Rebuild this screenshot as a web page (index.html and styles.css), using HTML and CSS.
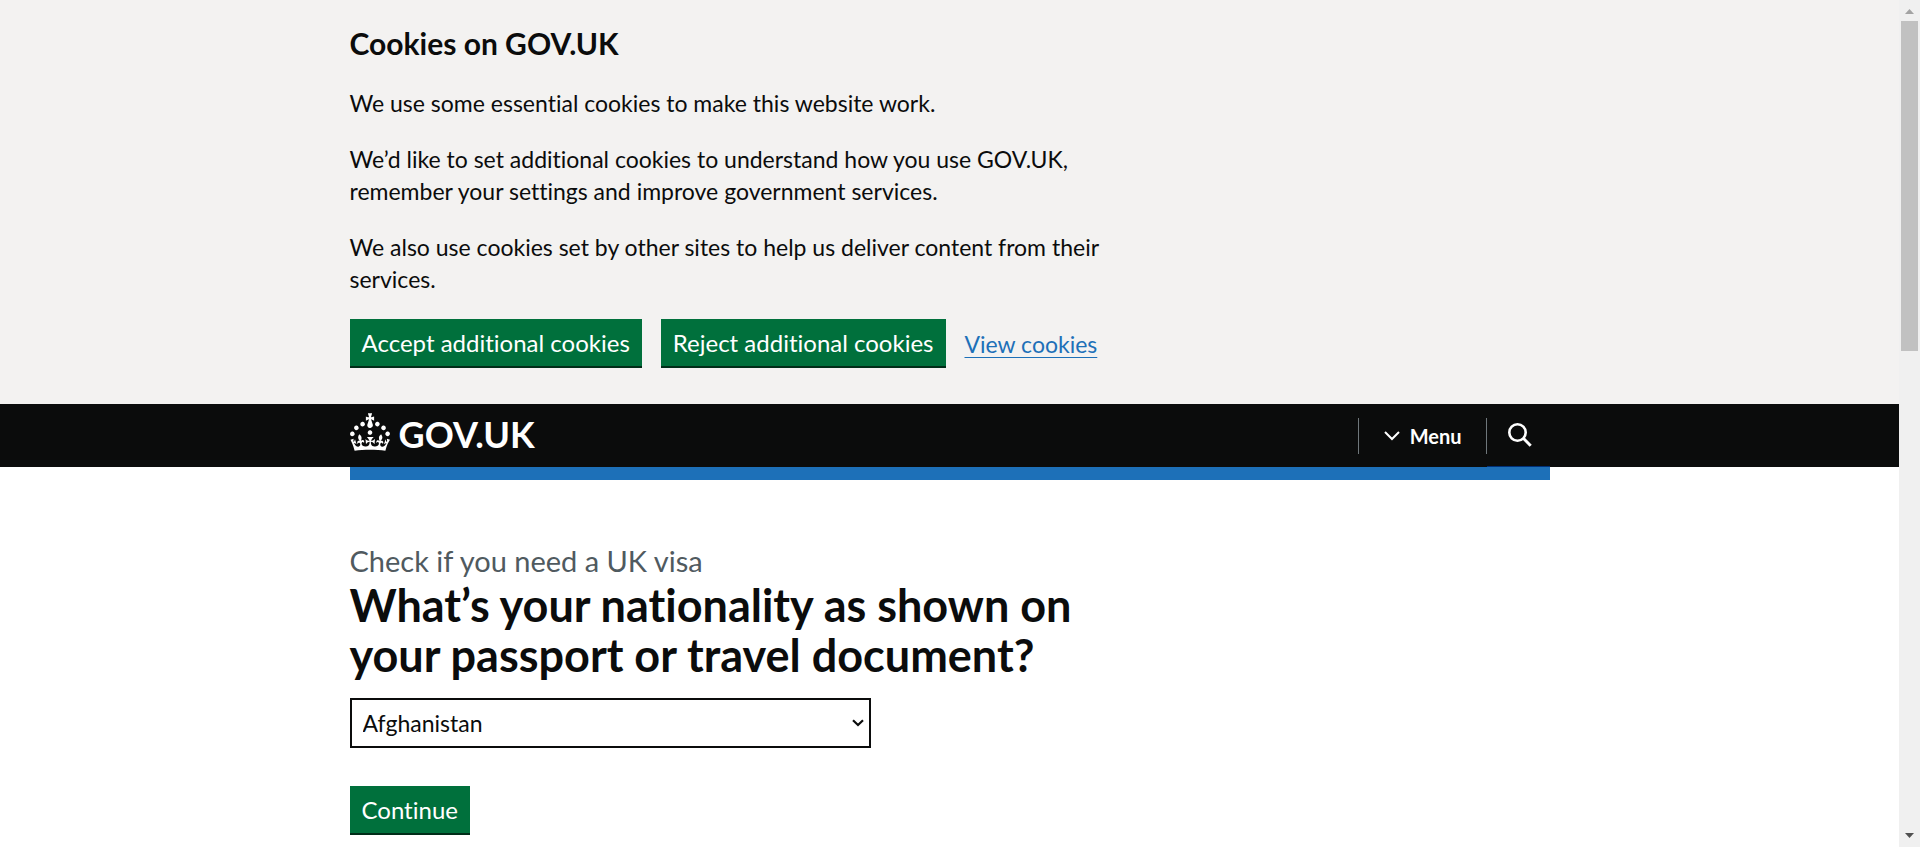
FILE: index.html
```html
<!DOCTYPE html>
<html lang="en">
<head>
<meta charset="utf-8">
<meta name="viewport" content="width=device-width, initial-scale=1">
<title>What’s your nationality as shown on your passport or travel document? - Check if you need a UK visa - GOV.UK</title>
<link rel="stylesheet" href="styles.css">
</head>
<body>
<div class="page">
  <section class="cookie-banner" aria-label="Cookies on GOV.UK">
    <div class="container">
      <div class="two-thirds">
        <h2 class="cookie-title">Cookies on GOV.UK</h2>
        <p class="body-text">We use some essential cookies to make this website work.</p>
        <p class="body-text">We’d like to set additional cookies to understand how you use GOV.UK, remember your settings and improve government services.</p>
        <p class="body-text">We also use cookies set by other sites to help us deliver content from their services.</p>
      </div>
      <div class="button-group">
        <button class="button" type="button">Accept additional cookies</button>
        <button class="button" type="button">Reject additional cookies</button>
        <a class="link" href="#">View cookies</a>
      </div>
    </div>
  </section>

  <header class="header">
    <div class="container header-row">
      <a class="logo" href="#">
        <svg class="crown" viewBox="0 0 32 30" aria-hidden="true"><path fill="currentColor" fill-rule="evenodd" d="M22.6 10.4c-1 .4-2-.1-2.4-1-.4-.9.1-2 1-2.4.9-.4 2 .1 2.4 1s-.1 2-1 2.4m-5.9 6.7c-.9.4-2-.1-2.4-1-.4-.9.1-2 1-2.4.9-.4 2 .1 2.4 1s-.1 2-1 2.4m10.8-3.7c-1 .4-2-.1-2.4-1-.4-.9.1-2 1-2.4.9-.4 2 .1 2.4 1s0 2-1 2.4m3.3 4.8c-1 .4-2-.1-2.4-1-.4-.9.1-2 1-2.4.9-.4 2 .1 2.4 1s-.1 2-1 2.4M17 4.7l2.3 1.2V2.5l-2.3.7-.2-.2.9-3h-3.4l.9 3-.2.2c-.1.1-2.3-.7-2.3-.7v3.4L15 4.7c.1.1.1.2.2.2l-1.3 4c-.1.2-.1.4-.1.6 0 1.1.8 2 1.9 2.2h.7c1-.2 1.9-1.1 1.9-2.1 0-.2 0-.4-.1-.6l-1.3-4c-.1-.2 0-.2.1-.3m-7.6 5.7c.9.4 2-.1 2.4-1 .4-.9-.1-2-1-2.4-.9-.4-2 .1-2.4 1s0 2 1 2.4m-5 3c.9.4 2-.1 2.4-1 .4-.9-.1-2-1-2.4-.9-.4-2 .1-2.4 1s.1 2 1 2.4m-3.2 4.8c.9.4 2-.1 2.4-1 .4-.9-.1-2-1-2.4-.9-.4-2 .1-2.4 1s0 2 1 2.4m14.8 11c4.4 0 8.6.3 12.3.8 1.1-4.5 2.4-7 3.7-8.8l-2.5-.9c.2 1.3.3 1.9 0 2.7-.4-.4-.8-1.1-1.1-2.3l-1.2 4c.7-.5 1.3-.8 2-.9-1.1 2.5-2.6 3.1-3.5 3-1.1-.2-1.7-1.2-1.5-2.1.3-1.2 1.5-1.5 2.1-.1 1.1-2.3-.8-3-2-2.3 1.9-1.9 2.1-3.5.6-5.6-2.1 1.6-2.1 3.2-1.2 5.5-1.2-1.4-3.2-.6-2.5 1.6.9-1.4 2.1-.5 1.9.8-.2 1.1-1.7 2.1-3.5 1.9-2.7-.2-2.9-2.1-2.9-3.6.7-.1 1.9.5 2.9 1.9l.4-4.3c-1.1 1.1-2.1 1.4-3.2 1.4.4-1.2 2.1-3 2.1-3h-5.4s1.7 1.9 2.1 3c-1.1 0-2.1-.2-3.2-1.4l.4 4.3c1-1.4 2.2-2 2.9-1.9-.1 1.5-.2 3.4-2.9 3.6-1.9.2-3.4-.8-3.5-1.9-.2-1.3 1-2.2 1.9-.8.7-2.3-1.2-3-2.5-1.6.9-2.2.9-3.9-1.2-5.5-1.5 2-1.3 3.7.6 5.6-1.2-.7-3.1 0-2 2.3.6-1.4 1.8-1.1 2.1.1.2.9-.3 1.9-1.5 2.1-.9.2-2.4-.5-3.5-3 .6 0 1.2.3 2 .9l-1.2-4c-.3 1.1-.7 1.9-1.1 2.3-.3-.8-.2-1.4 0-2.7l-2.5.9C1.3 23 2.6 25.5 3.7 30c3.7-.5 7.9-.8 12.3-.8"/></svg>
        <span class="wordmark">GOV.UK</span>
      </a>
      <nav class="nav" aria-label="Menu">
        <button class="menu-button" type="button">
          <svg class="chevron" viewBox="0 0 16 10" aria-hidden="true"><path d="M1 1l7 7 7-7" fill="none" stroke="currentColor" stroke-width="2"/></svg>
          <span>Menu</span>
        </button>
        <button class="search-button" type="button" aria-label="Search GOV.UK">
          <svg class="search-icon" viewBox="0 0 24 24" aria-hidden="true"><circle cx="9.5" cy="9.5" r="8.2" fill="none" stroke="currentColor" stroke-width="2.6"/><path d="M15.3 15.3l7.4 7.4" stroke="currentColor" stroke-width="3"/></svg>
        </button>
      </nav>
    </div>
  </header>
  <div class="container"><div class="blue-bar"></div></div>

  <main class="container main">
    <form class="two-thirds">
      <span class="caption">Check if you need a UK visa</span>
      <h1 class="title"><label for="nationality">What’s your nationality as shown on your passport or travel document?</label></h1>
      <div class="select-wrap">
        <select class="select" id="nationality"><option>Afghanistan</option></select>
        <svg class="select-arrow" viewBox="0 0 12 8" aria-hidden="true"><path d="M1 1.200l5 4.800 5-4.800" fill="none" stroke="currentColor" stroke-width="2.2"/></svg>
      </div>
      <button class="button" type="button">Continue</button>
    </form>
  </main>
</div>
<div class="scrollbar" aria-hidden="true">
  <svg class="arrow-up" viewBox="0 0 9 5"><path d="M0 5L4.500 0L9 5z" fill="currentColor"/></svg>
  <div class="track"><div class="thumb"></div></div>
  <svg class="arrow-down" viewBox="0 0 9 5"><path d="M0 0h9L4.500 5z" fill="currentColor"/></svg>
</div>
</body>
</html>
```
FILE: styles.css
```css
* { box-sizing: border-box; }

body {
  margin: 0;
  height: 100vh;
  display: grid;
  grid-template-columns: minmax(0, 1fr) 21px;
  overflow: hidden;
  background: #fff;
  color: #0b0c0c;
  font-family: Lato, Arial, sans-serif;
  font-size: 23px;
  font-variant-ligatures: none;
  line-height: 32px;
}

button, select {
  font: inherit;
  font-variant-ligatures: none;
}

.page { overflow: hidden; }

.container {
  max-width: 1200px;
  margin: 0 auto;
}

.two-thirds { max-width: 780px; }

.cookie-banner {
  background: #f3f2f1;
  padding: 24px 0 36px;
}

.cookie-title {
  margin: 0 0 25px;
  font-size: 30px;
  line-height: 38px;
}

.body-text { margin: 0 0 24px; }

.button-group {
  display: flex;
  flex-wrap: wrap;
  align-items: center;
  gap: 19px;
}

.button {
  height: 47px;
  margin-bottom: 2px;
  padding: 0 12px;
  border: 0;
  background: #00703c;
  box-shadow: 0 2px 0 #002d18;
  color: #fff;
  font-size: 24px;
  cursor: pointer;
}

.link {
  color: #1d70b8;
  text-decoration-thickness: 1px;
  text-underline-offset: 4px;
}

.header {
  background: #0b0c0c;
  color: #fff;
}

.header-row {
  display: flex;
  justify-content: space-between;
  height: 63px;
}

.logo {
  display: flex;
  align-items: center;
  gap: 9px;
  padding-bottom: 8px;
  color: inherit;
  text-decoration: none;
}

.crown { width: 40px; height: 38px; }

.wordmark {
  padding-top: 4px;
  font-size: 36px;
  font-weight: 700;
}

.nav { display: flex; }

.menu-button, .search-button {
  display: flex;
  align-items: center;
  border: 0;
  background: none;
  color: inherit;
  cursor: pointer;
}

.menu-button {
  align-self: center;
  gap: 10px;
  height: 36px;
  padding: 0 24px 0 25px;
  border: solid #6f777b;
  border-width: 0 1px;
  font-size: 20px;
  font-weight: 700;
}

.chevron { width: 16px; height: 10px; }

.search-button {
  padding: 0 18px 0 21px;
  border-bottom: 1px solid #003078;
}

.search-icon { width: 24px; height: 24px; }

.blue-bar {
  height: 13px;
  background: #1d70b8;
}

.main { padding-top: 62px; }

.caption {
  display: block;
  color: #505a5f;
  font-size: 29px;
  line-height: 38px;
}

.title {
  margin: 0 0 18px;
  font-size: 45px;
  line-height: 50px;
}

.select-wrap {
  display: grid;
  width: fit-content;
  margin-bottom: 38px;
}

.select {
  grid-area: 1 / 1;
  appearance: none;
  width: 521px;
  height: 50px;
  padding: 0 40px 0 11px;
  border: 2px solid #0b0c0c;
  border-radius: 0;
  background: #fff;
  color: inherit;
}

.select-arrow {
  grid-area: 1 / 1;
  place-self: center end;
  width: 12px;
  height: 8px;
  margin-right: 7px;
  pointer-events: none;
}

.scrollbar {
  display: flex;
  flex-direction: column;
  align-items: center;
  height: 100vh;
  padding: 9px 0;
  background: #f0f0f0;
}

.arrow-up, .arrow-down { width: 9px; height: 5px; }
.arrow-up { color: #a3a3a3; }
.arrow-down { color: #505050; }

.track {
  flex: 1;
  width: 17px;
  padding: 7px 0;
}

.thumb {
  height: 41%;
  background: #c1c1c1;
}
```
